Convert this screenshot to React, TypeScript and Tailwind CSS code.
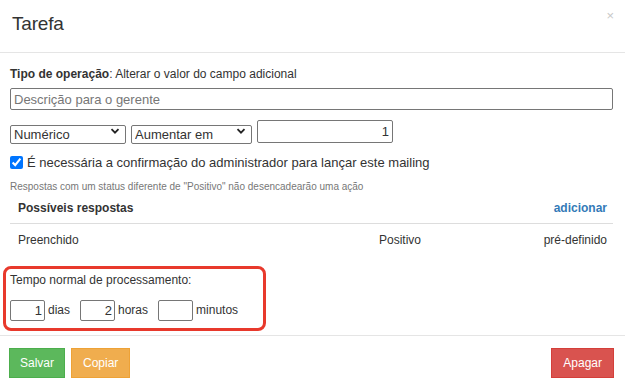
import React from 'react';

const Chevron = () => (
    <svg width="10" height="10" viewBox="0 0 10 10" className="absolute right-[6px] top-1/2 -translate-y-1/2 pointer-events-none">
        <path d="M1.5 3.2 L5 6.7 L8.5 3.2" stroke="#222" strokeWidth="1.8" fill="none" />
    </svg>
);

const Select = ({ value, width }: { value: string; width: string }) => (
    <div className={`relative ${width} h-[19px]`}>
        <select
            defaultValue={value}
            className="appearance-none w-full h-full border border-[#767676] rounded-[2px] bg-white pl-[3px] text-[13px] leading-[17px] text-[#333] outline-none"
        >
            <option>{value}</option>
        </select>
        <Chevron />
    </div>
);

const SmallInput = ({ value }: { value: string }) => (
    <input
        defaultValue={value}
        className="w-[35px] h-[21px] border border-[#767676] rounded-[2px] px-[2px] text-right text-[13px] text-[#333] outline-none"
    />
);

export default function App() {
    return (
        <div className="w-[625px] h-[388px] bg-white overflow-hidden text-[#333]" style={{ fontFamily: '"Liberation Sans", Arial, sans-serif' }}>
            {/* header */}
            <div className="h-[53px] border-b border-[#e5e5e5] flex items-start justify-between pl-[12px] pr-[11px]">
                <h4 className="mt-[10px] text-[19px] font-normal text-[#333] tracking-[-0.2px]">Tarefa</h4>
                <span className="mt-[9px] text-[13px] text-[#c8c8c8] leading-none">×</span>
            </div>

            {/* body */}
            <div className="pl-[10px] pr-[12px] pt-[14px]">
                <div className="text-[12px] leading-[14px]">
                    <b className="font-bold">Tipo de operação</b>: Alterar o valor do campo adicional
                </div>
                <input
                    placeholder="Descrição para o gerente"
                    className="mt-[7px] w-full h-[22px] border border-[#767676] rounded-[2px] px-[3px] text-[13px] placeholder:text-[#767676] outline-none"
                />
                <div className="mt-[9px] flex items-center gap-[5px]">
                    <Select value="Numérico" width="w-[116px]" />
                    <Select value="Aumentar em" width="w-[121px]" />
                    <input
                        defaultValue="1"
                        className="w-[136px] h-[23px] border border-[#767676] rounded-[2px] px-[3px] text-right text-[13px] text-[#333] outline-none"
                    />
                </div>
                <label className="mt-[12px] flex items-center gap-[2px] text-[13px] leading-[16px]">
                    <input type="checkbox" defaultChecked className="w-[13px] h-[13px] m-0 mr-[2px] accent-[#0075ff]" />
                    É necessária a confirmação do administrador para lançar este mailing
                </label>
                <div className="mt-[10px] text-[10px] leading-[12px] text-[#777]">
                    Respostas com um status diferente de "Positivo" não desencadearão uma ação
                </div>

                {/* table */}
                <div className="mt-[1px] flex items-center justify-between h-[30px] pl-[8px] pr-[6px] border-b border-[#ddd] text-[12px] font-bold">
                    <span>Possíveis respostas</span>
                    <span className="text-[#337ab7]">adicionar</span>
                </div>
                <div className="flex items-center h-[32px] pl-[8px] pr-[6px] text-[12px]">
                    <span className="w-[361px]">Preenchido</span>
                    <span className="flex-1">Positivo</span>
                    <span>pré-definido</span>
                </div>

                {/* processing time */}
                <div className="mt-[10px] ml-[-7px] w-[263px] h-[65px] border-[3px] border-[#e8392c] rounded-[8px] pl-[4px] pt-[4px]">
                    <div className="text-[12px] leading-[14px]">Tempo normal de processamento:</div>
                    <div className="mt-[13px] flex items-center text-[12px]">
                        <SmallInput value="1" />
                        <span className="ml-[3px] mr-[10px]">dias</span>
                        <SmallInput value="2" />
                        <span className="ml-[3px] mr-[10px]">horas</span>
                        <SmallInput value="" />
                        <span className="ml-[3px]">minutos</span>
                    </div>
                </div>
            </div>

            {/* footer */}
            <div className="mt-[4px] border-t border-[#e5e5e5] flex items-center justify-between pl-[9px] pr-[11px] pt-[12px]">
                <div className="flex gap-[6px]">
                    <button className="h-[30px] px-[10px] bg-[#5cb85c] border border-[#4cae4c] text-white text-[12px]">Salvar</button>
                    <button className="h-[30px] px-[11px] bg-[#f0ad4e] border border-[#eea236] text-white text-[12px]">Copiar</button>
                </div>
                <button className="h-[30px] px-[11px] bg-[#d9534f] border border-[#d43f3a] text-white text-[12px]">Apagar</button>
            </div>
        </div>
    );
}
